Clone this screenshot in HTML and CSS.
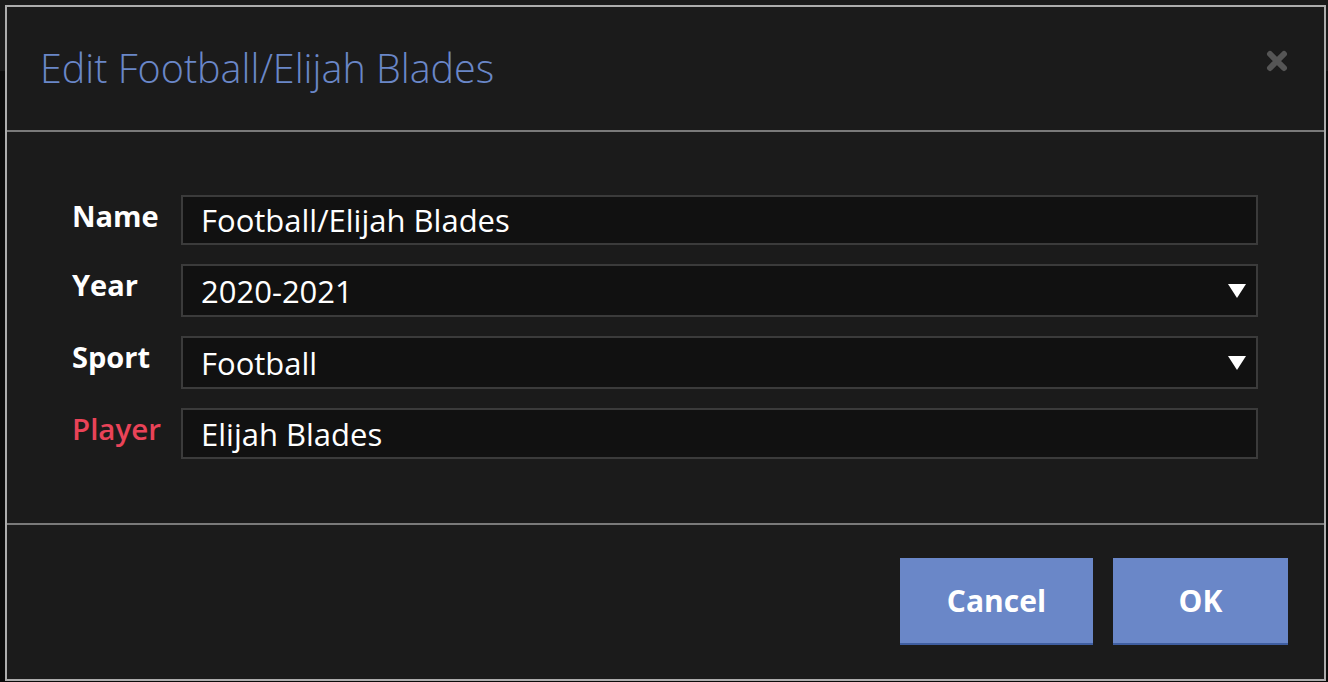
FILE: index.html
```html
<!DOCTYPE html>
<html>
<head>
<meta charset="utf-8">
<link rel="stylesheet" href="styles.css">
</head>
<body>
<div class="dialog">
  <div class="header">
    <h1 class="title">Edit Football/Elijah Blades</h1>
    <span class="close">
      <svg width="24" height="24" viewBox="0 0 24 24"><path d="M5 5 L19 19 M19 5 L5 19" stroke="#555" stroke-width="6" stroke-linecap="round"/></svg>
    </span>
  </div>
  <div class="body">
    <div class="row">
      <label class="label">Name</label>
      <div class="field input">Football/Elijah Blades</div>
    </div>
    <div class="row">
      <label class="label">Year</label>
      <div class="field select">2020-2021<span class="caret"></span></div>
    </div>
    <div class="row">
      <label class="label">Sport</label>
      <div class="field select">Football<span class="caret"></span></div>
    </div>
    <div class="row">
      <label class="label required">Player</label>
      <div class="field input player">Elijah Blades</div>
    </div>
  </div>
  <div class="footer">
    <button class="btn cancel">Cancel</button>
    <button class="btn ok">OK</button>
  </div>
</div>
</body>
</html>
```
FILE: styles.css
```css
html, body { margin: 0; }
body {
  padding: 5px;
  background: linear-gradient(to bottom, #1a1a1a 71px, #0b0b0b 71px);
  font-family: "Open Sans", "Noto Sans", sans-serif;
  height: 682px;
  box-sizing: border-box;
}
.dialog {
  width: 1321px;
  height: 676px;
  box-sizing: border-box;
  border: 2px solid #acacac;
  background: #1b1b1b;
  display: flex;
  flex-direction: column;
}
.header {
  height: 125px;
  box-sizing: border-box;
  border-bottom: 2px solid #7a7a7a;
  display: flex;
  justify-content: space-between;
  align-items: flex-start;
  padding: 0 35px 0 33px;
}
.title {
  margin: 0;
  padding-top: 36px;
  font-weight: 300;
  font-size: 39.5px;
  line-height: 50px;
  color: #6a87c8;
}
.close {
  margin-top: 42px;
  display: block;
  width: 24px;
  height: 24px;
}
.body {
  height: 393px;
  box-sizing: border-box;
  border-bottom: 2px solid #7a7a7a;
  padding: 63px 66px 0 65px;
  display: flex;
  flex-direction: column;
  gap: 19px;
}
.row {
  display: flex;
  align-items: flex-start;
}
.label {
  width: 109px;
  flex: none;
  color: #fff;
  font-weight: 700;
  font-size: 29px;
  line-height: 40px;
  padding-top: 1px;
}
.label.required { color: #ea4358; font-weight: 600; font-size: 29.5px; }
.field {
  flex: 1;
  box-sizing: border-box;
  border: 2px solid #3b3b3b;
  background: #111;
  color: #fff;
  font-size: 31px;
  padding: 0 18px;
  display: flex;
  align-items: center;
  position: relative;
}
.input { height: 50px; }
.input.player { height: 51px; }
.select { height: 53px; }
.caret {
  position: absolute;
  right: 10px;
  top: 18px;
  width: 0;
  height: 0;
  border-left: 9px solid transparent;
  border-right: 9px solid transparent;
  border-top: 14px solid #fff;
}
.footer {
  flex: 1;
  display: flex;
  justify-content: flex-end;
  align-items: flex-start;
  padding: 33px 36px 0 0;
  gap: 20px;
}
.btn {
  height: 87px;
  border: none;
  border-bottom: 2px solid #3f5ea0;
  background: #6a87c8;
  color: #fff;
  font-family: "Open Sans", "Noto Sans", sans-serif;
  font-weight: 700;
  font-size: 30px;
  padding: 0;
}
.cancel { width: 193px; }
.ok { width: 175px; }
```
